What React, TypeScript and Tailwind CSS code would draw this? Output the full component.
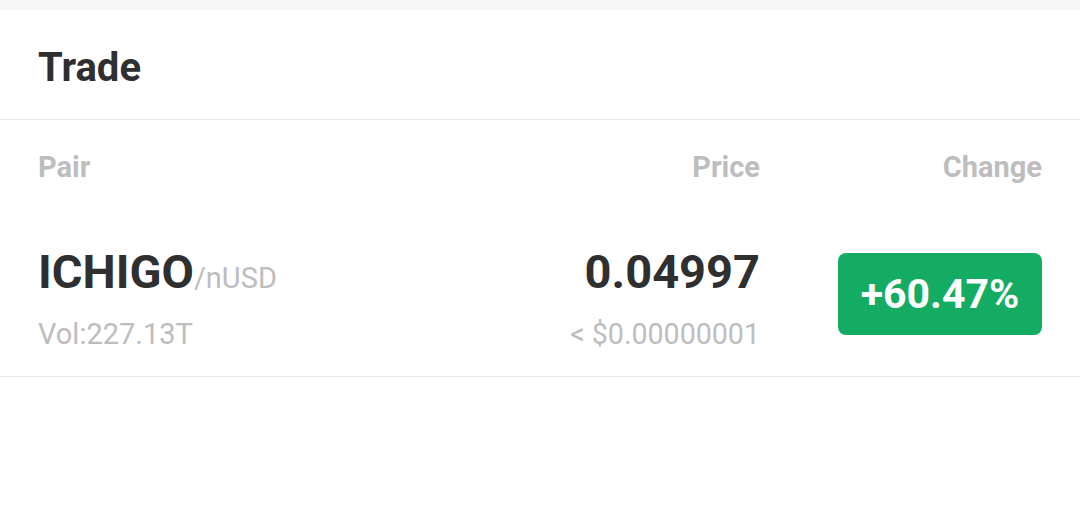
export default function App() {
  return (
    <div className="w-[1080px] h-[516px] bg-white font-['Roboto',sans-serif] overflow-hidden">
      <div className="h-[10px] bg-[#f6f6f6]" />
      <div className="h-[110px] flex items-center pt-[6px] px-[38px] border-b border-[#ebebeb]">
        <h1 className="text-[40px] font-bold text-[#2f2f2f] leading-none">Trade</h1>
      </div>

      <div className="px-[38px]">
        <div className="flex items-center h-[92px] pt-[4px] text-[29px] font-bold text-[#bdbdbd]">
          <div className="flex-1">Pair</div>
          <div className="text-right">Price</div>
          <div className="w-[204px] ml-[78px] text-right">Change</div>
        </div>
      </div>

      <div className="px-[38px] border-b border-[#ebebeb]">
        <div className="flex items-center h-[164px]">
          <div className="flex-1 flex flex-col gap-[25px] mt-[8px]">
            <div className="flex items-baseline leading-none">
              <span className="text-[47px] font-bold text-[#2f2f2f]">ICHIGO</span>
              <span className="text-[29px] text-[#bdbdbd]">/nUSD</span>
            </div>
            <div className="text-[29px] text-[#bdbdbd] leading-none">Vol:227.13T</div>
          </div>
          <div className="flex flex-col items-end gap-[25px] mt-[8px]">
            <div className="text-[47px] font-bold text-[#2f2f2f] leading-none">0.04997</div>
            <div className="text-[28.6px] text-[#bdbdbd] leading-none">&lt; $0.00000001</div>
          </div>
          <div className="w-[204px] ml-[78px] h-[82px] rounded-[8px] bg-[#13ac62] flex items-center justify-center">
            <span className="text-[41px] font-bold text-white leading-none">+60.47%</span>
          </div>
        </div>
      </div>
    </div>
  );
}
